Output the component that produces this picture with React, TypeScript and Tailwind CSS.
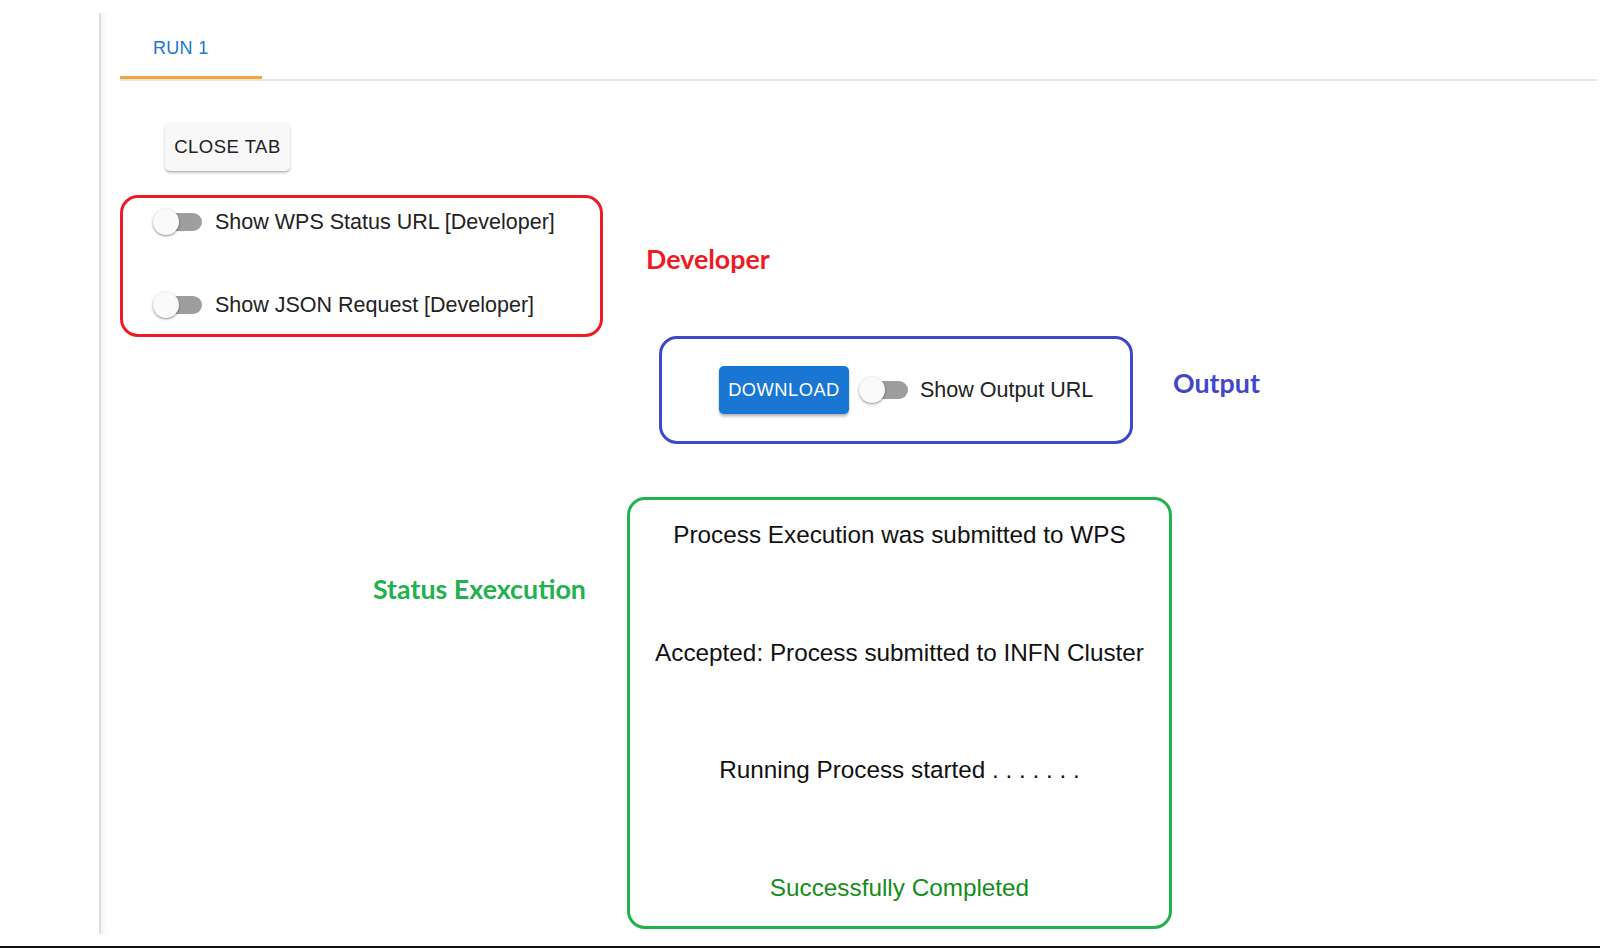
import React from "react";

const sans = { fontFamily: '"Liberation Sans", Arial, sans-serif' };
const label = { fontFamily: 'Lato, "Open Sans", sans-serif' };

function Toggle() {
  return (
    <div className="relative w-[50px] h-[26px] shrink-0">
      <div className="absolute left-[7px] top-[4px] w-[42px] h-[18px] rounded-full bg-[#9e9e9e]" />
      <div className="absolute left-0 top-0 w-[26px] h-[26px] rounded-full bg-[#fafafa] shadow-[0_1px_3px_rgba(0,0,0,0.35),0_1px_1px_rgba(0,0,0,0.14)]" />
    </div>
  );
}

export default function App() {
  return (
    <div className="w-[1600px] h-[948px] bg-white overflow-hidden flex flex-col" style={sans}>
      <div className="ml-[99px] mt-[13px] w-[1498px] h-[921px] border-l-2 border-[#dedede] shadow-[inset_6px_0_6px_-4px_rgba(0,0,0,0.06)] pl-[19px] flex flex-col">
        {/* Tabs */}
        <div className="flex border-b-2 border-[#e6e6e6]">
          <div className="w-[142px] h-[66px] pt-[7px] pl-[33px] flex items-center justify-start border-b-[3px] border-[#f6a33a] text-[18px] tracking-[0.3px] text-[#1976d2]">
            RUN 1
          </div>
        </div>

        {/* Close tab */}
        <button className="mt-[41px] ml-[45px] w-[125px] h-[49px] rounded-[5px] bg-[#f8f8f8] shadow-[0_2px_3px_rgba(0,0,0,0.22),0_1px_1px_rgba(0,0,0,0.1)] text-[18.5px] tracking-[0.5px] text-[#222]">
          CLOSE TAB
        </button>

        {/* Developer row */}
        <div className="mt-[24px] flex items-start">
          <div className="w-[483px] h-[142px] border-[3px] border-[#ed1c24] rounded-[18px] pl-[30px] pt-[11px] flex flex-col gap-[57px]">
            <div className="flex items-center">
              <Toggle />
              <span className="ml-[12px] text-[21.5px] text-[#222] leading-[26px]">Show WPS Status URL [Developer]</span>
            </div>
            <div className="flex items-center">
              <Toggle />
              <span className="ml-[12px] text-[21.5px] text-[#222] leading-[26px]">Show JSON Request [Developer]</span>
            </div>
          </div>
          <div className="ml-[43px] mt-[47px] leading-[34px] text-[26.8px] font-bold text-[#ed1c24]" style={label}>
            Developer
          </div>
        </div>

        {/* Output row */}
        <div className="-mt-[1px] ml-[539px] flex items-center">
          <div className="w-[474px] h-[108px] border-[3px] border-[#3f48cc] rounded-[18px] pl-[57px] flex items-center">
            <button className="w-[130px] h-[48px] rounded-[5px] bg-[#1976d2] text-white text-[18.3px] tracking-[0.5px] shadow-[0_3px_3px_rgba(0,0,0,0.2),0_1px_2px_rgba(0,0,0,0.14)]">
              DOWNLOAD
            </button>
            <div className="ml-[10px] flex items-center">
              <Toggle />
              <span className="ml-[11px] text-[21.5px] text-[#222] leading-[26px]">Show Output URL</span>
            </div>
          </div>
          <div className="ml-[40px] mb-[14px] leading-[34px] text-[26.8px] font-bold text-[#3f48cc]" style={label}>
            Output
          </div>
        </div>

        {/* Status row */}
        <div className="mt-[53px] pl-[253px] flex items-start">
          <div className="w-[254px] mt-[75px] leading-[34px] text-[26.8px] font-bold text-[#22b14c]" style={label}>
            Status Exexcution
          </div>
          <div className="w-[545px] h-[432px] border-[3px] border-[#22b14c] rounded-[18px] pt-[21px] pb-[24px] flex flex-col items-center justify-between text-[24.3px] leading-[28px] text-[#111]">
            <div>Process Execution was submitted to WPS</div>
            <div>Accepted: Process submitted to INFN Cluster</div>
            <div>Running Process started . . . . . . .</div>
            <div className="text-[#138d1b]">Successfully Completed</div>
          </div>
        </div>
      </div>
      <div className="mt-[12px] h-[2px] w-full bg-[#111]" />
    </div>
  );
}
